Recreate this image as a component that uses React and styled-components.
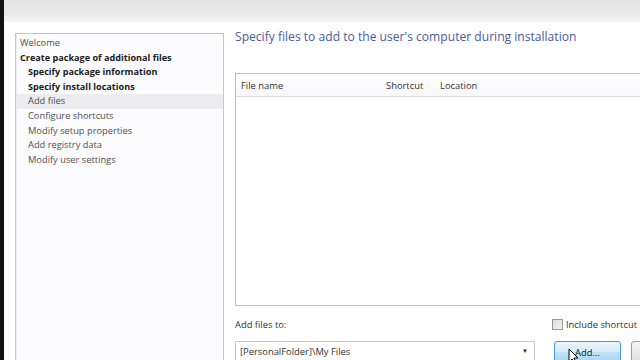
import React from 'react'
import styled, { createGlobalStyle } from 'styled-components'

const GlobalStyle = createGlobalStyle`
  html, body {
    margin: 0;
    padding: 0;
    width: 640px;
    height: 360px;
    overflow: hidden;
    background: #ffffff;
    font-family: "Open Sans", "Noto Sans", sans-serif;
  }
`

const steps = [
  { label: 'Welcome', level: 0 },
  { label: 'Create package of additional files', level: 0, bold: true },
  { label: 'Specify package information', level: 1, bold: true },
  { label: 'Specify install locations', level: 1, bold: true },
  { label: 'Add files', level: 1, active: true },
  { label: 'Configure shortcuts', level: 1 },
  { label: 'Modify setup properties', level: 1 },
  { label: 'Add registry data', level: 1 },
  { label: 'Modify user settings', level: 1 },
]

export default function App() {
  return (
    <>
      <GlobalStyle />
      <Screen>
        <BlackEdge />
        <Main>
          <TitleStrip />
          <Content>
            <Sidebar>
              {steps.map((s) => (
                <Step key={s.label} level={s.level} bold={s.bold} active={s.active}>
                  {s.label}
                </Step>
              ))}
            </Sidebar>
            <Pane>
              <Heading>Specify files to add to the user's computer during installation</Heading>
              <FileList>
                <ListHeader>
                  <Col width="145px">File name</Col>
                  <Col width="54px">Shortcut</Col>
                  <Col>Location</Col>
                </ListHeader>
              </FileList>
              <OptionsRow>
                <Label>Add files to:</Label>
                <CheckLabel>
                  <CheckBox />
                  Include shortcut
                </CheckLabel>
              </OptionsRow>
              <ControlsRow>
                <Combo>
                  <span>[PersonalFolder]\My Files</span>
                  <Arrow>▼</Arrow>
                </Combo>
                <Button hover>
                  Add...
                  <Cursor viewBox="0 0 12 18">
                    <path d="M1 1 L1 14 L4 11 L6.5 16.5 L8.5 15.5 L6 10 L10 10 Z" fill="#fff" stroke="#000" strokeWidth="1" strokeLinejoin="round" />
                  </Cursor>
                </Button>
                <Button />
              </ControlsRow>
            </Pane>
          </Content>
        </Main>
      </Screen>
    </>
  )
}

const Screen = styled.div`
  display: flex;
  width: 640px;
  height: 360px;
  overflow: hidden;
`

const BlackEdge = styled.div`
  width: 4px;
  flex: none;
  background: #111;
`

const Main = styled.div`
  flex: 1;
  display: flex;
  flex-direction: column;
  min-width: 0;
`

const TitleStrip = styled.div`
  height: 22px;
  flex: none;
  background: linear-gradient(to bottom, #e4e4e4 0%, #e9e9e9 60%, #f5f5f5 100%);
`

const Content = styled.div`
  flex: 1;
  display: flex;
  padding-top: 11px;
  min-height: 0;
`

const Sidebar = styled.div`
  margin-left: 11px;
  width: 207px;
  flex: none;
  border: 1px solid #c6c6c6;
  border-bottom: none;
  background: #fcfcfe;
  padding-top: 2px;
  box-shadow: inset 1px 0 0 #eee;
`

const Step = styled.div`
  height: 14.6px;
  line-height: 14.6px;
  font-size: ${(p) => (p.bold ? 9.1 : 9.3)}px;
  padding-left: ${(p) => (p.level ? 12 : 4)}px;
  font-weight: ${(p) => (p.bold ? 700 : 400)};
  color: ${(p) => (p.bold ? '#1a1a1a' : '#505050')};
  background: ${(p) => (p.active ? '#ededf0' : 'transparent')};
  white-space: nowrap;
`

const Pane = styled.div`
  flex: 1;
  display: flex;
  flex-direction: column;
  padding-left: 11px;
  min-width: 0;
`

const Heading = styled.div`
  font-size: 12.1px;
  color: #4a5c9c;
  height: 40px;
  line-height: 8px;
  white-space: nowrap;
  flex: none;
`

const FileList = styled.div`
  height: 231px;
  flex: none;
  margin-right: -4px;
  border: 1px solid #bdbdbd;
  border-right: none;
  background: #fff;
  box-shadow: inset 0 1px 0 #e2e2e2;
`

const ListHeader = styled.div`
  display: flex;
  height: 22px;
  align-items: center;
  padding-left: 5px;
  border-bottom: 1px solid #dcdce2;
  background: linear-gradient(to bottom, #ffffff, #f8f8fb);
`

const Col = styled.div`
  width: ${(p) => p.width || 'auto'};
  font-size: 9.4px;
  color: #333;
  white-space: nowrap;
`

const OptionsRow = styled.div`
  display: flex;
  justify-content: space-between;
  align-items: center;
  height: 26px;
  margin-top: 5px;
  flex: none;
`

const Label = styled.div`
  font-size: 9.4px;
  color: #333;
`

const CheckLabel = styled.div`
  display: flex;
  align-items: center;
  gap: 3px;
  font-size: 9.4px;
  color: #333;
  margin-right: 3px;
`

const CheckBox = styled.span`
  width: 9px;
  height: 9px;
  border: 1px solid #9a9a9a;
  background: linear-gradient(135deg, #dcdcdc, #f4f4f4);
`

const ControlsRow = styled.div`
  display: flex;
  align-items: flex-start;
  margin-top: 4px;
  flex: none;
`

const Combo = styled.div`
  width: 300px;
  height: 20px;
  flex: none;
  border: 1px solid #c9c9c9;
  display: flex;
  align-items: center;
  justify-content: space-between;
  padding: 0 6px 0 4px;
  font-size: 9.4px;
  color: #333;
  box-sizing: border-box;
  background: #fff;
`

const Arrow = styled.span`
  font-size: 6px;
  color: #222;
`

const Button = styled.div`
  position: relative;
  margin-left: 19px;
  width: 67px;
  height: 22px;
  flex: none;
  box-sizing: border-box;
  border: 1px solid ${(p) => (p.hover ? '#4a9bc8' : '#9c9c9c')};
  border-radius: 3px;
  background: ${(p) =>
    p.hover
      ? 'linear-gradient(to bottom, #e8f5fd 0%, #d6ecfa 50%, #bfe2f7 51%, #a8d6f3 100%)'
      : 'linear-gradient(to bottom, #f6f6f6, #dedede)'};
  display: flex;
  justify-content: center;
  padding-top: 4px;
  font-size: 9.4px;
  color: #222;
  &:last-child {
    margin-left: 10px;
  }
`

const Cursor = styled.svg`
  position: absolute;
  left: 13px;
  top: 6px;
  width: 12px;
  height: 18px;
`
